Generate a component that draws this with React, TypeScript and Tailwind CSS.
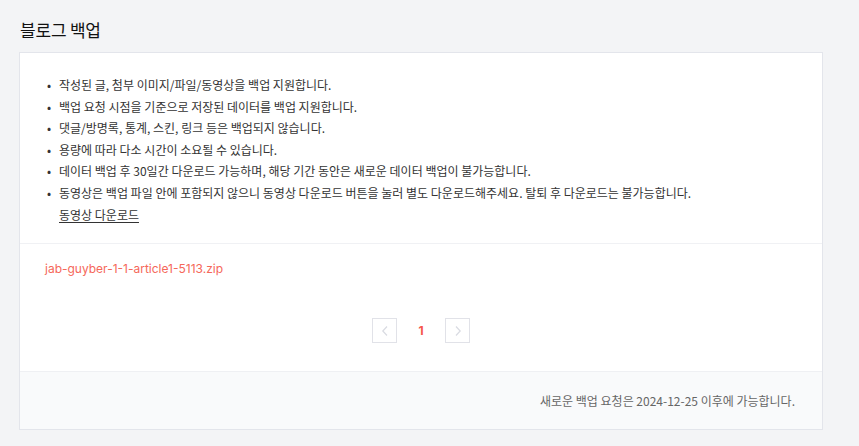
import React from 'react';

const notices = [
  '작성된 글, 첨부 이미지/파일/동영상을 백업 지원합니다.',
  '백업 요청 시점을 기준으로 저장된 데이터를 백업 지원합니다.',
  '댓글/방명록, 통계, 스킨, 링크 등은 백업되지 않습니다.',
  '용량에 따라 다소 시간이 소요될 수 있습니다.',
  '데이터 백업 후 30일간 다운로드 가능하며, 해당 기간 동안은 새로운 데이터 백업이 불가능합니다.',
];

const Chevron: React.FC<{ dir: 'left' | 'right' }> = ({ dir }) => (
  <svg width="8" height="12" viewBox="0 0 8 12" fill="none">
    <path
      d={dir === 'left' ? 'M6 1.5 1.8 6 6 10.5' : 'M2 1.5 6.2 6 2 10.5'}
      stroke="#d9dbe2"
      strokeWidth="1.2"
    />
  </svg>
);

const App: React.FC = () => {
  return (
    <div
      className="min-h-screen bg-[#f3f4f6] pl-[19px] pr-[36px] pt-[18px] pb-[16px] text-[#333]"
      style={{ fontFamily: '"Noto Sans CJK KR", "Noto Sans", sans-serif' }}
    >
      <h1 className="pl-px text-[17px] leading-[24px] font-normal text-[#111] tracking-[-0.2px]">블로그 백업</h1>

      <div className="mt-[10px] border border-[#e3e5eb] bg-white">
        <ul className="pl-[27px] pr-6 pt-[21px] pb-[18px] text-[12px] leading-[21.6px] text-[#333]">
          {notices.map((n) => (
            <li key={n} className="flex">
              <span className="w-[12px] shrink-0 text-[#333]">•</span>
              <span>{n}</span>
            </li>
          ))}
          <li className="flex">
            <span className="w-[12px] shrink-0">•</span>
            <div>
              <div>동영상은 백업 파일 안에 포함되지 않으니 동영상 다운로드 버튼을 눌러 별도 다운로드해주세요. 탈퇴 후 다운로드는 불가능합니다.</div>
              <a href="#" className="underline underline-offset-2 text-[#333]">동영상 다운로드</a>
            </div>
          </li>
        </ul>

        <div className="border-t border-[#f0f1f4] px-[25px] pt-[15px] pb-[28px]">
          <a href="#" className="block text-[12px] leading-[20px] text-[#f5685a]" style={{ fontFamily: 'Inter, "Noto Sans CJK KR", sans-serif' }}>
            jab-guyber-1-1-article1-5113.zip
          </a>

          <div className="mt-[39px] flex items-center justify-center gap-[14px]">
            <button className="w-[25px] h-[25px] border border-[#e1e2e8] flex items-center justify-center">
              <Chevron dir="left" />
            </button>
            <span className="w-[20px] text-center text-[12px] font-bold text-[#f5564a]" style={{ fontFamily: 'Inter, sans-serif' }}>1</span>
            <button className="w-[25px] h-[25px] border border-[#e1e2e8] flex items-center justify-center">
              <Chevron dir="right" />
            </button>
          </div>
        </div>

        <div className="border-t border-[#eff0f3] bg-[#f9fafb] h-[58px] flex items-center justify-end pr-[27px]">
          <p className="text-[12px] text-[#666]">새로운 백업 요청은 2024-12-25 이후에 가능합니다.</p>
        </div>
      </div>
    </div>
  );
};

export default App;
